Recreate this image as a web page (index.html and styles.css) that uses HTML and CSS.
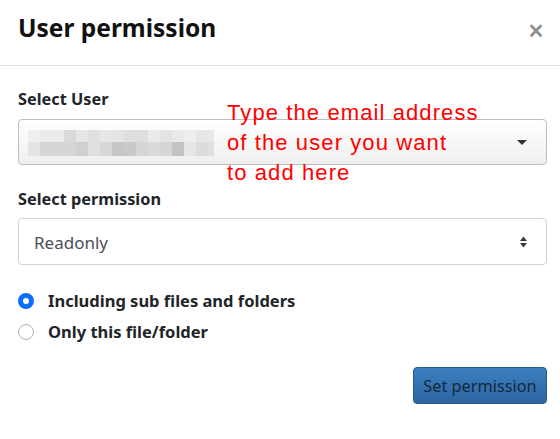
FILE: index.html
```html
<!DOCTYPE html>
<html>
<head>
<meta charset="utf-8">
<link rel="stylesheet" href="styles.css">
</head>
<body>
<div class="modal">
  <div class="header">
    <h1 class="title">User permission</h1>
    <span class="close">×</span>
  </div>
  <div class="body">
    <label class="label">Select User</label>
    <div class="select select-user">
      <div class="pixels">
        <div class="prow r1">
          <i style="background:#efefef"></i><i style="background:#ebebeb"></i><i style="background:#ebebeb"></i><i style="background:#d9d9d9"></i><i style="background:#e6e6e6"></i><i style="background:#e0e0e0"></i><i style="background:#e6e6e6"></i><i style="background:#e4e4e4"></i><i style="background:#dedede"></i><i style="background:#dedede"></i><i style="background:#eaeaea"></i><i style="background:#e3e3e3"></i><i style="background:#e9e9e9"></i><i style="background:#eeeeee"></i><i style="background:#e6e6e6"></i><i style="background:#e9e9e9"></i>
        </div>
        <div class="prow r2">
          <i style="background:#e4e4e4"></i><i style="background:#d5d5d5"></i><i style="background:#d5d5d5"></i><i style="background:#d6d6d6"></i><i style="background:#d0d0d0"></i><i style="background:#e0e0e0"></i><i style="background:#d8d8d8"></i><i style="background:#c6c6c6"></i><i style="background:#c9c9c9"></i><i style="background:#d6d6d6"></i><i style="background:#dadada"></i><i style="background:#d6d6d6"></i><i style="background:#c3c3c3"></i><i style="background:#e6e6e6"></i><i style="background:#dcdcdc"></i><i style="background:#e0e0e0"></i>
        </div>
      </div>
      <svg class="caret" width="10" height="5" viewBox="0 0 10 5"><path d="M0 0H10L5 5Z" fill="#333"/></svg>
    </div>
    <label class="label label2">Select permission</label>
    <div class="select select-perm">
      <span class="value">Readonly</span>
      <svg class="updown" width="7" height="12" viewBox="0 0 7 12"><path d="M0 5L3.5 0.5L7 5Z M0 7H7L3.5 11.5Z" fill="#343a40"/></svg>
    </div>
    <div class="radios">
      <div class="radio"><span class="dot checked"></span><span>Including sub files and folders</span></div>
      <div class="radio"><span class="dot"></span><span>Only this file/folder</span></div>
    </div>
    <div class="footer">
      <button class="btn">Set permission</button>
    </div>
  </div>
  <div class="note">Type the email address<br>of the user you want<br>to add here</div>
</div>
</body>
</html>
```
FILE: styles.css
```css
html, body {
  margin: 0;
  padding: 0;
  background: #fff;
}
body {
  font-family: "Noto Sans", "Open Sans", sans-serif;
  color: #212529;
}
.modal {
  position: relative;
  width: 560px;
  height: 439px;
  overflow: hidden;
}
.header {
  display: flex;
  justify-content: space-between;
  align-items: center;
  height: 66px;
  box-sizing: border-box;
  padding: 0 16px 10px 18px;
  border-bottom: 1px solid #e3e3e3;
}
.title {
  margin: 0;
  font-size: 24.5px;
  font-weight: 700;
  color: #111;
}
.close {
  font-size: 28px;
  font-weight: 600;
  color: #8f8f8f;
  line-height: 1;
  margin-top: 4px;
}
.body {
  padding: 21px 13px 0 18px;
}
.label {
  display: block;
  font-size: 16.3px;
  font-weight: 700;
  line-height: 24px;
  color: #212529;
  margin-bottom: 8px;
}
.label2 {
  margin-top: 22px;
  margin-bottom: 7px;
}
.select {
  display: flex;
  align-items: center;
  justify-content: space-between;
  box-sizing: border-box;
  border-radius: 4px;
}
.select-user {
  height: 46px;
  border: 1px solid #bdbdbd;
  background: linear-gradient(#ffffff, #efefef);
  padding: 0 19px 0 9px;
}
.pixels {
  width: 186px;
  overflow: hidden;
  margin-top: 2px;
}
.prow {
  display: flex;
}
.prow i {
  flex: 0 0 12px;
  display: block;
}
.r1 i { height: 12px; }
.r2 i { height: 14px; }
.select-perm {
  height: 47px;
  border: 1px solid #ced4da;
  background: #fff;
  padding: 0 19px 0 15px;
}
.value {
  font-size: 17px;
  color: #495057;
  margin-top: 2px;
}
.radios {
  margin-top: 20px;
}
.radio {
  display: flex;
  align-items: center;
  height: 31px;
  font-size: 16.5px;
  font-weight: 700;
  color: #212529;
}
.dot {
  width: 16px;
  height: 16px;
  box-sizing: border-box;
  border-radius: 50%;
  border: 1px solid #adb5bd;
  background: #fff;
  margin-right: 14px;
  flex: none;
}
.dot.checked {
  border: 5px solid #0d6efd;
  background: #fff;
}
.footer {
  display: flex;
  justify-content: flex-end;
  margin-top: 20px;
}
.btn {
  width: 134px;
  height: 37px;
  box-sizing: border-box;
  border: 1px solid #245a8c;
  border-radius: 4px;
  background: linear-gradient(#3b7fc0, #2b65a0);
  color: #17283c;
  font-family: "Noto Sans", "Open Sans", sans-serif;
  font-size: 16.3px;
  padding: 0;
}
.note {
  position: absolute;
  left: 227px;
  top: 98px;
  font-family: "Liberation Sans", Arial, sans-serif;
  font-size: 22px;
  letter-spacing: 1.1px;
  line-height: 30px;
  color: #ff0000;
}
```
